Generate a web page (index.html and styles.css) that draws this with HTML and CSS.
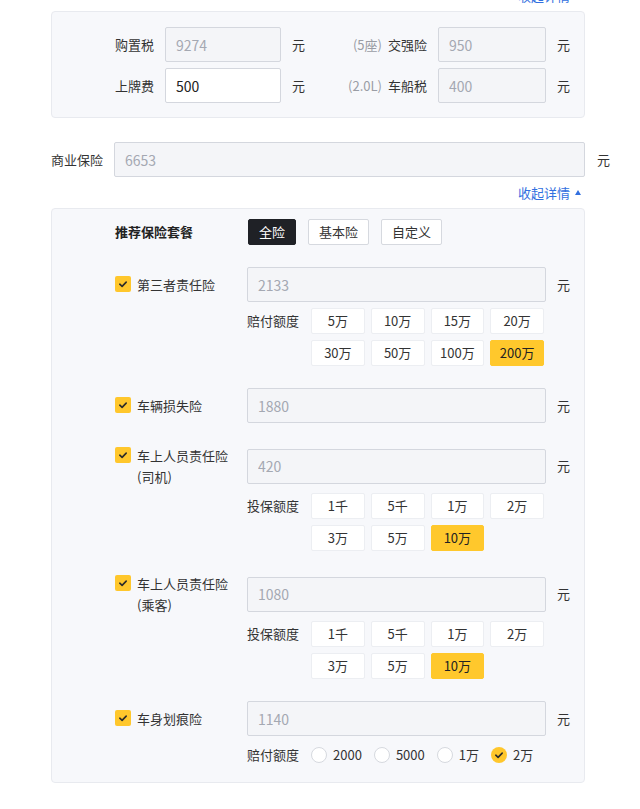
FILE: index.html
```html
<!DOCTYPE html>
<html lang="zh-CN">
<head>
<meta charset="utf-8">
<title>保险费用</title>
<link rel="stylesheet" href="styles.css">
</head>
<body>
<div class="page">
  <div class="toggle-row first"><a class="toggle">收起详情<i class="tri"></i></a></div>

  <div class="panel tax-panel">
    <div class="tax-row">
      <span class="tax-label">购置税</span>
      <input class="field tax-input" type="text" value="9274" disabled>
      <span class="unit">元</span>
      <span class="tax-label2"><span class="hint">(5座)</span>交强险</span>
      <input class="field tax-input2" type="text" value="950" disabled>
      <span class="unit">元</span>
    </div>
    <div class="tax-row">
      <span class="tax-label">上牌费</span>
      <input class="field editable tax-input" type="text" value="500">
      <span class="unit">元</span>
      <span class="tax-label2"><span class="hint">(2.0L)</span>车船税</span>
      <input class="field tax-input2" type="text" value="400" disabled>
      <span class="unit">元</span>
    </div>
  </div>

  <div class="biz-row">
    <span class="biz-label">商业保险</span>
    <input class="field biz-input" type="text" value="6653" disabled>
    <span class="unit biz-unit">元</span>
  </div>

  <div class="toggle-row"><a class="toggle">收起详情<i class="tri"></i></a></div>

  <div class="panel ins-panel">
    <div class="pkg-row">
      <span class="pkg-title">推荐保险套餐</span>
      <div class="pkg-btns">
        <button class="pkg-btn active">全险</button>
        <button class="pkg-btn">基本险</button>
        <button class="pkg-btn">自定义</button>
      </div>
    </div>

    <div class="item">
      <div class="item-head">
        <div class="item-label">
          <span class="check"><svg viewBox="0 0 16 16" width="16" height="16"><path d="M4.8 8.2 L7.1 10.4 L11.2 6.1" fill="none" stroke="#2b2b2b" stroke-width="1.6" stroke-linecap="round" stroke-linejoin="round"/></svg></span>
          <span class="item-name">第三者责任险</span>
        </div>
        <input class="field item-input" type="text" value="2133" disabled>
        <span class="unit">元</span>
      </div>
      <div class="opt-row">
        <span class="opt-label">赔付额度</span>
        <div class="opt-grid">
          <span class="opt">5万</span>
          <span class="opt">10万</span>
          <span class="opt">15万</span>
          <span class="opt">20万</span>
          <span class="opt">30万</span>
          <span class="opt">50万</span>
          <span class="opt">100万</span>
          <span class="opt on">200万</span>
        </div>
      </div>
    </div>

    <div class="item">
      <div class="item-head">
        <div class="item-label">
          <span class="check"><svg viewBox="0 0 16 16" width="16" height="16"><path d="M4.8 8.2 L7.1 10.4 L11.2 6.1" fill="none" stroke="#2b2b2b" stroke-width="1.6" stroke-linecap="round" stroke-linejoin="round"/></svg></span>
          <span class="item-name">车辆损失险</span>
        </div>
        <input class="field item-input" type="text" value="1880" disabled>
        <span class="unit">元</span>
      </div>
    </div>

    <div class="item">
      <div class="item-head">
        <div class="item-label">
          <span class="check"><svg viewBox="0 0 16 16" width="16" height="16"><path d="M4.8 8.2 L7.1 10.4 L11.2 6.1" fill="none" stroke="#2b2b2b" stroke-width="1.6" stroke-linecap="round" stroke-linejoin="round"/></svg></span>
          <span class="item-name">车上人员责任险<br>(司机)</span>
        </div>
        <input class="field item-input" type="text" value="420" disabled>
        <span class="unit">元</span>
      </div>
      <div class="opt-row">
        <span class="opt-label">投保额度</span>
        <div class="opt-grid">
          <span class="opt">1千</span>
          <span class="opt">5千</span>
          <span class="opt">1万</span>
          <span class="opt">2万</span>
          <span class="opt">3万</span>
          <span class="opt">5万</span>
          <span class="opt on">10万</span>
        </div>
      </div>
    </div>

    <div class="item">
      <div class="item-head">
        <div class="item-label">
          <span class="check"><svg viewBox="0 0 16 16" width="16" height="16"><path d="M4.8 8.2 L7.1 10.4 L11.2 6.1" fill="none" stroke="#2b2b2b" stroke-width="1.6" stroke-linecap="round" stroke-linejoin="round"/></svg></span>
          <span class="item-name">车上人员责任险<br>(乘客)</span>
        </div>
        <input class="field item-input" type="text" value="1080" disabled>
        <span class="unit">元</span>
      </div>
      <div class="opt-row">
        <span class="opt-label">投保额度</span>
        <div class="opt-grid">
          <span class="opt">1千</span>
          <span class="opt">5千</span>
          <span class="opt">1万</span>
          <span class="opt">2万</span>
          <span class="opt">3万</span>
          <span class="opt">5万</span>
          <span class="opt on">10万</span>
        </div>
      </div>
    </div>

    <div class="item">
      <div class="item-head">
        <div class="item-label">
          <span class="check"><svg viewBox="0 0 16 16" width="16" height="16"><path d="M4.8 8.2 L7.1 10.4 L11.2 6.1" fill="none" stroke="#2b2b2b" stroke-width="1.6" stroke-linecap="round" stroke-linejoin="round"/></svg></span>
          <span class="item-name">车身划痕险</span>
        </div>
        <input class="field item-input" type="text" value="1140" disabled>
        <span class="unit">元</span>
      </div>
      <div class="radio-row">
        <span class="opt-label">赔付额度</span>
        <span class="radio"><i class="dot"></i>2000</span>
        <span class="radio"><i class="dot"></i>5000</span>
        <span class="radio"><i class="dot"></i>1万</span>
        <span class="radio on"><i class="dot"><svg viewBox="0 0 16 16" width="16" height="16"><path d="M4.8 8.2 L7.1 10.4 L11.2 6.1" fill="none" stroke="#2b2b2b" stroke-width="1.6" stroke-linecap="round" stroke-linejoin="round"/></svg></i>2万</span>
      </div>
    </div>
  </div>
</div>
</body>
</html>
```

FILE: styles.css
```css
html, body {
  margin: 0;
  padding: 0;
  background: #ffffff;
}

body {
  font-family: "Noto Sans CJK SC", "Microsoft YaHei", sans-serif;
  font-size: 13px;
  line-height: 20px;
  color: #333333;
  overflow: hidden;
}

.page {
  width: 534px;
  padding-left: 51px;
}

/* collapse link */
.toggle-row {
  height: 31px;
  display: flex;
  justify-content: flex-end;
  align-items: center;
  padding-right: 4px;
}

.toggle-row.first {
  margin-top: -20px;
}

.toggle {
  display: flex;
  align-items: center;
  gap: 5px;
  color: #3270e0;
  cursor: pointer;
}

.tri {
  width: 0;
  height: 0;
  border-left: 3px solid transparent;
  border-right: 3px solid transparent;
  border-bottom: 5px solid #3270e0;
}

/* panels */
.panel {
  background: #f7f8fb;
  border: 1px solid #e8eaef;
  border-radius: 4px;
}

.field {
  box-sizing: border-box;
  height: 35px;
  margin: 0;
  border: 1px solid #d4d7de;
  border-radius: 2px;
  background: #f4f5f8;
  padding: 0 10px;
  font-family: "Noto Sans CJK SC", "Microsoft YaHei", sans-serif;
  font-size: 14px;
  color: #a4a8b2;
  outline: none;
  flex-shrink: 0;
}

.field.editable {
  background: #ffffff;
  color: #222222;
}

.unit {
  margin-left: 11px;
  width: 13px;
  flex-shrink: 0;
  color: #333333;
}

/* tax panel */
.tax-panel {
  padding: 15px 14px 14px 0;
  display: flex;
  flex-direction: column;
  gap: 6px;
}

.tax-row {
  display: flex;
  align-items: center;
  height: 35px;
}

.tax-label {
  width: 102px;
  margin-right: 11px;
  text-align: right;
  flex-shrink: 0;
}

.tax-input {
  width: 116px;
}

.tax-label2 {
  flex: 1;
  text-align: right;
  margin-right: 11px;
}

.hint {
  color: #9a9da5;
  margin-right: 6px;
}

.tax-input2 {
  width: 108px;
}

/* business insurance */
.biz-row {
  display: flex;
  align-items: center;
  margin-top: 24px;
}

.biz-label {
  width: 52px;
  margin-right: 11px;
  flex-shrink: 0;
}

.biz-input {
  width: 471px;
}

.biz-unit {
  margin-left: 12px;
}

/* insurance panel */
.ins-panel {
  padding: 10px 14px 17px 63px;
}

.pkg-row {
  display: flex;
  align-items: center;
  margin-bottom: 1px;
}

.pkg-title {
  width: 133px;
  font-weight: bold;
  color: #222222;
  flex-shrink: 0;
}

.pkg-btns {
  display: flex;
  gap: 12px;
}

.pkg-btn {
  box-sizing: border-box;
  height: 26px;
  margin: 0;
  padding: 0 10px;
  border: 1px solid #d6d9df;
  border-radius: 2px;
  background: #ffffff;
  font-family: "Noto Sans CJK SC", "Microsoft YaHei", sans-serif;
  font-size: 13px;
  line-height: 24px;
  color: #333333;
}

.pkg-btn.active {
  background: #1f2126;
  border-color: #1f2126;
  color: #ffffff;
}

.item {
  margin-top: 22px;
}

.item-head {
  display: flex;
  align-items: center;
}

.item-label {
  width: 132px;
  display: flex;
  align-items: flex-start;
  line-height: 21px;
  flex-shrink: 0;
}

.check {
  width: 16px;
  height: 16px;
  margin-top: 2px;
  margin-right: 6px;
  border-radius: 2px;
  background: #ffc72c;
  flex-shrink: 0;
  display: block;
}

.check svg {
  display: block;
}

.item-input {
  width: 299px;
}

.opt-row {
  display: flex;
  align-items: flex-start;
  margin-top: 6px;
  margin-left: 132px;
}

.opt-label {
  width: 52px;
  margin-right: 12px;
  line-height: 26px;
  flex-shrink: 0;
}

.opt-grid {
  width: 233px;
  display: grid;
  grid-template-columns: repeat(4, 1fr);
  gap: 6px;
}

.opt {
  box-sizing: border-box;
  height: 26px;
  border: 1px solid #eceef2;
  border-radius: 2px;
  background: #ffffff;
  display: flex;
  align-items: center;
  justify-content: center;
  color: #333333;
}

.opt.on {
  background: #ffc82c;
  border-color: #ffc82c;
  color: #222222;
}

.radio-row {
  display: flex;
  align-items: center;
  height: 20px;
  margin-top: 9px;
  margin-left: 132px;
}

.radio-row .opt-label {
  line-height: 20px;
}

.radio {
  display: flex;
  align-items: center;
  margin-right: 12px;
}

.dot {
  box-sizing: border-box;
  width: 16px;
  height: 16px;
  border-radius: 50%;
  border: 1px solid #d6d9df;
  background: #ffffff;
  margin-right: 6px;
  display: block;
}

.radio.on .dot {
  background: #ffc72c;
  border: none;
}

.dot svg {
  display: block;
}
```
